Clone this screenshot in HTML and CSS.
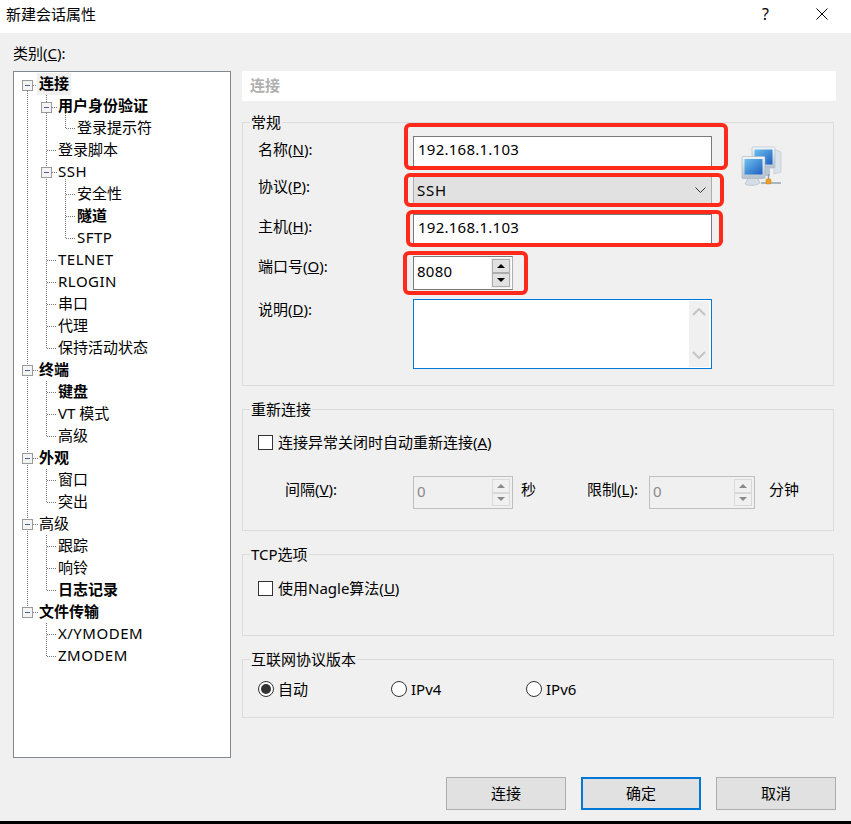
FILE: index.html
```html
<!DOCTYPE html>
<html lang="zh-CN">
<head>
    <meta charset="UTF-8">
    <meta name="viewport" content="width=device-width, initial-scale=1.0">
    <title>新建会话属性</title>
    <link rel="stylesheet" href="styles.css">
</head>
<body>
    <div class="dialog">
        <div class="titlebar">
            <span class="title">新建会话属性</span>
            <span class="help">?</span>
            <svg class="close" width="12" height="12" viewBox="0 0 12 12">
                <path d="M0.5 0.5L11.5 11.5M11.5 0.5L0.5 11.5" stroke="#000" stroke-width="1" fill="none"/>
            </svg>
        </div>

        <div class="main">
            <div class="side">
                <div class="side-label">类别(<u>C</u>):</div>
                <div class="tree">
                    <!-- connector lines and expanders, in page coordinates -->
                    <svg class="tree-lines" width="216" height="685" viewBox="14 72 216 685">
                        <g stroke="#777" stroke-width="1" stroke-dasharray="1 1" fill="none">
                            <path d="M27.5 91V612M33 85.5H38"/>
                            <path d="M46.5 95V348.5M52 107.5H57M47 150.5H57M52 172.5H57M47 260.5H57M47 282.5H57M47 304.5H57M47 326.5H57M47 348.5H57"/>
                            <path d="M65.5 113V128.5M66 128.5H76M65.5 179V238.5M66 194.5H76M66 216.5H76M66 238.5H76"/>
                            <path d="M33 370.5H38M46.5 381V436.5M47 392.5H57M47 414.5H57M47 436.5H57"/>
                            <path d="M33 458.5H38M46.5 469V502.5M47 480.5H57M47 502.5H57"/>
                            <path d="M33 524.5H38M46.5 535V590.5M47 546.5H57M47 568.5H57M47 590.5H57"/>
                            <path d="M33 612.5H38M46.5 623V656.5M47 634.5H57M47 656.5H57"/>
                        </g>
                        <g class="expander">
                            <rect x="22.5" y="80.5" width="10" height="10"/><path d="M25 85.5H30"/>
                            <rect x="41.5" y="102.5" width="10" height="10"/><path d="M44 107.5H49"/>
                            <rect x="41.5" y="167.5" width="10" height="10"/><path d="M44 172.5H49"/>
                            <rect x="22.5" y="365.5" width="10" height="10"/><path d="M25 370.5H30"/>
                            <rect x="22.5" y="453.5" width="10" height="10"/><path d="M25 458.5H30"/>
                            <rect x="22.5" y="519.5" width="10" height="10"/><path d="M25 524.5H30"/>
                            <rect x="22.5" y="607.5" width="10" height="10"/><path d="M25 612.5H30"/>
                        </g>
                    </svg>
                    <div class="node lv0 bold selected"><span>连接</span></div>
                    <div class="node lv1 bold"><span>用户身份验证</span></div>
                    <div class="node lv2"><span>登录提示符</span></div>
                    <div class="node lv1"><span>登录脚本</span></div>
                    <div class="node lv1 latin"><span>SSH</span></div>
                    <div class="node lv2"><span>安全性</span></div>
                    <div class="node lv2 bold"><span>隧道</span></div>
                    <div class="node lv2 latin"><span>SFTP</span></div>
                    <div class="node lv1 latin"><span>TELNET</span></div>
                    <div class="node lv1 latin"><span>RLOGIN</span></div>
                    <div class="node lv1"><span>串口</span></div>
                    <div class="node lv1"><span>代理</span></div>
                    <div class="node lv1"><span>保持活动状态</span></div>
                    <div class="node lv0 bold"><span>终端</span></div>
                    <div class="node lv1 bold"><span>键盘</span></div>
                    <div class="node lv1"><span>VT 模式</span></div>
                    <div class="node lv1"><span>高级</span></div>
                    <div class="node lv0 bold"><span>外观</span></div>
                    <div class="node lv1"><span>窗口</span></div>
                    <div class="node lv1"><span>突出</span></div>
                    <div class="node lv0"><span>高级</span></div>
                    <div class="node lv1"><span>跟踪</span></div>
                    <div class="node lv1"><span>响铃</span></div>
                    <div class="node lv1 bold"><span>日志记录</span></div>
                    <div class="node lv0 bold"><span>文件传输</span></div>
                    <div class="node lv1 latin"><span>X/YMODEM</span></div>
                    <div class="node lv1 latin"><span>ZMODEM</span></div>
                </div>
            </div>

            <div class="content">
                <div class="page-header">连接</div>

                <div class="group group-general">
                    <div class="group-title">常规</div>
                    <div class="fields">
                        <div class="row row-name">
                            <label class="field-label nudge-3">名称(<u>N</u>):</label>
                            <div class="textbox">192.168.1.103</div>
                        </div>
                        <div class="row row-proto">
                            <label class="field-label">协议(<u>P</u>):</label>
                            <div class="combo">
                                <span>SSH</span>
                                <svg width="11" height="6" viewBox="0 0 11 6"><path d="M0.5 0.5L5.5 5.5L10.5 0.5" stroke="#333" fill="none"/></svg>
                            </div>
                        </div>
                        <div class="row row-host">
                            <label class="field-label nudge-2">主机(<u>H</u>):</label>
                            <div class="textbox">192.168.1.103</div>
                        </div>
                        <div class="row row-port">
                            <label class="field-label">端口号(<u>O</u>):</label>
                            <div class="spinner">
                                <span class="spin-value">8080</span>
                                <div class="spin-buttons">
                                    <div class="spin-btn"><i class="arrow-up"></i></div>
                                    <div class="spin-btn"><i class="arrow-down"></i></div>
                                </div>
                            </div>
                        </div>
                        <div class="row row-desc">
                            <label class="field-label">说明(<u>D</u>):</label>
                            <div class="memo">
                                <div class="memo-scroll">
                                    <svg width="14" height="8" viewBox="0 0 14 8"><path d="M1 7L7 1L13 7" stroke="#c4c4c4" stroke-width="2" fill="none"/></svg>
                                    <svg width="14" height="8" viewBox="0 0 14 8"><path d="M1 1L7 7L13 1" stroke="#c4c4c4" stroke-width="2" fill="none"/></svg>
                                </div>
                            </div>
                        </div>
                    </div>
                    <svg class="net-icon" width="42" height="42" viewBox="0 0 42 42">
                        <defs>
                            <linearGradient id="screen" x1="0" y1="0" x2="1" y2="1">
                                <stop offset="0" stop-color="#6cc0f0"/>
                                <stop offset="1" stop-color="#1f5fc0"/>
                            </linearGradient>
                            <linearGradient id="shell" x1="0" y1="0" x2="0" y2="1">
                                <stop offset="0" stop-color="#f2f6fa"/>
                                <stop offset="1" stop-color="#b4c2ce"/>
                            </linearGradient>
                        </defs>
                        <path d="M33 3L40 6V26L33 28Z" fill="#dbe3ea" stroke="#b8c4ce" stroke-width="0.6"/>
                        <rect x="11" y="1" width="23" height="21" rx="1" fill="url(#shell)" stroke="#a9b8c4" stroke-width="0.6"/>
                        <rect x="13.5" y="3.5" width="18" height="15" fill="url(#screen)"/>
                        <path d="M19 22H29V30H19Z" fill="#b8c6d2"/>
                        <rect x="1" y="10.5" width="23" height="22" rx="1" fill="url(#shell)" stroke="#a3b2be" stroke-width="0.6"/>
                        <rect x="3.5" y="13" width="18" height="15.5" fill="url(#screen)"/>
                        <path d="M7 32.5H17L19 37C15 40 7 40 4 38Z" fill="#d5dee6" stroke="#aab6c0" stroke-width="0.6"/>
                        <path d="M20 37H40" stroke="#a8b6c2" stroke-width="2"/>
                        <path d="M27.5 28V34" stroke="#8fa0ae" stroke-width="1.5"/>
                        <rect x="25" y="33" width="5" height="5" rx="1" fill="#f0a020" stroke="#c87a10" stroke-width="0.5"/>
                    </svg>
                </div>

                <div class="group group-reconnect">
                    <div class="group-title">重新连接</div>
                    <div class="check-row"><i class="checkbox"></i><span>连接异常关闭时自动重新连接(<u>A</u>)</span></div>
                    <div class="interval-row">
                        <label class="interval-label">间隔(<u>V</u>):</label>
                        <div class="spinner spinner-off spin-interval">
                            <span class="spin-value">0</span>
                            <div class="spin-buttons">
                                <div class="spin-btn"><i class="arrow-up"></i></div>
                                <div class="spin-btn"><i class="arrow-down"></i></div>
                            </div>
                        </div>
                        <span class="unit-sec">秒</span>
                        <label class="limit-label">限制(<u>L</u>):</label>
                        <div class="spinner spinner-off spin-limit">
                            <span class="spin-value">0</span>
                            <div class="spin-buttons">
                                <div class="spin-btn"><i class="arrow-up"></i></div>
                                <div class="spin-btn"><i class="arrow-down"></i></div>
                            </div>
                        </div>
                        <span class="unit-min">分钟</span>
                    </div>
                </div>

                <div class="group group-tcp">
                    <div class="group-title">TCP选项</div>
                    <div class="check-row"><i class="checkbox"></i><span>使用Nagle算法(<u>U</u>)</span></div>
                </div>

                <div class="group group-ip">
                    <div class="group-title">互联网协议版本</div>
                    <div class="radio-row">
                        <div class="radio-item radio-auto"><i class="radio checked"></i><span>自动</span></div>
                        <div class="radio-item radio-v4"><i class="radio"></i><span>IPv4</span></div>
                        <div class="radio-item"><i class="radio"></i><span>IPv6</span></div>
                    </div>
                </div>
            </div>
        </div>

        <div class="footer">
            <button class="btn">连接</button>
            <button class="btn btn-default">确定</button>
            <button class="btn">取消</button>
        </div>

        <!-- red annotations drawn on top of the screenshot -->
        <div class="mark mark-name"></div>
        <div class="mark mark-proto"></div>
        <div class="mark mark-host"></div>
        <div class="mark mark-port"></div>
    </div>
</body>
</html>
```

FILE: styles.css
```css
* {
    box-sizing: border-box;
}
body {
    margin: 0;
    background-color: #000;
    font-family: "Noto Sans", "Noto Sans CJK SC", sans-serif;
    font-size: 15px;
    line-height: 20px;
    color: #000;
}
.dialog {
    position: relative;
    display: flex;
    flex-direction: column;
    width: 851px;
    height: 821px;
    background-color: #f0f0f0;
    overflow: hidden;
}
.titlebar {
    display: flex;
    align-items: center;
    height: 33px;
    padding: 0 23px 6px 6px;
    background-color: #fff;
    flex-shrink: 0;
}
.title {
    flex: 1;
}
.help {
    margin-right: 47px;
    font-size: 16px;
}
.main {
    display: flex;
    flex: 1;
    padding-left: 13px;
}
.side {
    width: 218px;
    margin-right: 11px;
    padding-top: 10px;
}
.side-label {
    height: 28px;
}
.tree {
    position: relative;
    width: 218px;
    height: 687px;
    padding-top: 1px;
    background-color: #fff;
    border: 1px solid #828790;
}
.tree-lines {
    position: absolute;
    top: 0;
    left: 0;
}
.expander rect {
    fill: #f4f4f4;
    stroke: #9a9a9a;
}
.expander path {
    stroke: #4d5f94;
    fill: none;
}
.node {
    position: relative;
    height: 22px;
    white-space: nowrap;
}
.node.lv0 {
    padding-left: 25px;
}
.node.lv1 {
    padding-left: 44px;
}
.node.lv2 {
    padding-left: 63px;
}
.node.bold {
    font-weight: 700;
}
.node.latin {
    letter-spacing: 0.5px;
}
.node.selected {
    padding-left: 23px;
}
.node.selected span {
    display: inline-block;
    padding: 0 2px 2px;
    background-color: #f0f0f0;
}
.content {
    width: 594px;
    padding-top: 38px;
}
.page-header {
    height: 30px;
    margin-bottom: 21px;
    padding-left: 8px;
    line-height: 28px;
    background-color: #fff;
    color: #b0b0b0;
    font-weight: 700;
}
.group {
    position: relative;
    width: 592px;
    margin-bottom: 23px;
    padding-left: 15px;
    border: 1px solid #dcdcdc;
}
.group-title {
    position: absolute;
    top: -11px;
    left: 7px;
    padding: 0 1px;
    background-color: #f0f0f0;
}
.group-general {
    display: flex;
    height: 264px;
    padding-top: 13px;
}
.group-reconnect {
    height: 122px;
    padding-top: 22px;
}
.group-tcp {
    height: 82px;
    padding-top: 23px;
}
.group-ip {
    height: 59px;
    padding-top: 19px;
    margin-bottom: 0;
}
.fields {
    width: 454px;
}
.row {
    display: flex;
}
.field-label {
    width: 155px;
}
.nudge-3 {
    padding-top: 3px;
}
.nudge-2 {
    padding-top: 2px;
}
.row-proto {
    margin-top: 8px;
}
.row-host {
    margin-top: 9px;
}
.row-port {
    margin-top: 10px;
}
.row-desc {
    margin-top: 9px;
}
.textbox {
    width: 299px;
    height: 32px;
    padding: 2px 0 0 4px;
    background-color: #fff;
    border: 1px solid #7a7a7a;
    letter-spacing: 0.25px;
}
.combo {
    display: flex;
    align-items: center;
    justify-content: space-between;
    width: 299px;
    height: 29px;
    padding: 0 5px 2px 3px;
    background-color: #e1e1e1;
    border: 1px solid #adadad;
    letter-spacing: 0.8px;
}
.spinner {
    display: flex;
    justify-content: space-between;
    width: 100px;
    height: 34px;
    padding: 1px 1px 1px 3px;
    background-color: #fff;
    border: 1px solid #7a7a7a;
    border-right-color: #adadad;
    letter-spacing: 0.25px;
}
.spin-value {
    padding-top: 3px;
}
.spin-buttons {
    display: flex;
    flex-direction: column;
    justify-content: space-between;
    width: 20px;
    padding: 1px;
    background-color: #f0f0f0;
}
.spin-btn {
    display: flex;
    align-items: center;
    justify-content: center;
    height: 14px;
    background-color: #e1e1e1;
    border: 1px solid #adadad;
}
.arrow-up,
.arrow-down {
    width: 0;
    height: 0;
    border-left: 4px solid transparent;
    border-right: 4px solid transparent;
}
.arrow-up {
    border-bottom: 4px solid #000;
}
.arrow-down {
    border-top: 4px solid #000;
}
.memo {
    display: flex;
    justify-content: flex-end;
    width: 299px;
    height: 70px;
    padding: 1px;
    background-color: #fff;
    border: 1px solid #0078d7;
}
.memo-scroll {
    display: flex;
    flex-direction: column;
    align-items: center;
    justify-content: space-between;
    width: 20px;
    margin-right: 1px;
    padding: 7px 0 8px;
    background-color: #f0f0f0;
}
.net-icon {
    margin: 10px 0 0 29px;
}
.check-row {
    display: flex;
    align-items: center;
}
.checkbox {
    width: 15px;
    height: 15px;
    margin-right: 5px;
    background-color: #fff;
    border: 1px solid #333;
}
.interval-row {
    display: flex;
    margin-top: 24px;
}
.interval-label {
    width: 155px;
    padding: 3px 0 0 27px;
}
.spinner-off {
    height: 33px;
    background-color: #f0f0f0;
    border-color: #bfbfbf;
    color: #8a8a8a;
}
.spinner-off .spin-buttons {
    background-color: #f0f0f0;
}
.spinner-off .spin-btn {
    background-color: #f0f0f0;
    border-color: #d9d9d9;
}
.spinner-off .arrow-up {
    border-bottom-color: #8a8a8a;
}
.spinner-off .arrow-down {
    border-top-color: #8a8a8a;
}
.spin-limit {
    width: 106px;
}
.unit-sec {
    padding: 3px 0 0 8px;
    width: 74px;
}
.limit-label {
    width: 62px;
    padding-top: 3px;
}
.unit-min {
    padding: 3px 0 0 14px;
}
.radio-row {
    display: flex;
}
.radio-item {
    display: flex;
    align-items: center;
}
.radio-auto {
    width: 133px;
}
.radio-v4 {
    width: 135px;
}
.radio {
    display: flex;
    align-items: center;
    justify-content: center;
    width: 16px;
    height: 16px;
    margin-right: 4px;
    background-color: #fff;
    border: 1px solid #333;
    border-radius: 50%;
}
.radio.checked::after {
    content: "";
    width: 10px;
    height: 10px;
    background-color: #333;
    border-radius: 50%;
}
.footer {
    display: flex;
    justify-content: flex-end;
    gap: 15px;
    padding: 0 15px 11px 0;
}
.btn {
    width: 120px;
    height: 33px;
    padding: 0 0 2px;
    background-color: #e1e1e1;
    border: 1px solid #adadad;
    font: inherit;
    color: #000;
}
.btn-default {
    border: 2px solid #0078d7;
}
.mark {
    position: absolute;
    border: 4px solid #ff2a1a;
    border-radius: 6px;
}
.mark-name {
    left: 404px;
    top: 123px;
    width: 324px;
    height: 47px;
}
.mark-proto {
    left: 404px;
    top: 173px;
    width: 320px;
    height: 34px;
}
.mark-host {
    left: 406px;
    top: 210px;
    width: 317px;
    height: 37px;
}
.mark-port {
    left: 403px;
    top: 251px;
    width: 125px;
    height: 44px;
}
```
